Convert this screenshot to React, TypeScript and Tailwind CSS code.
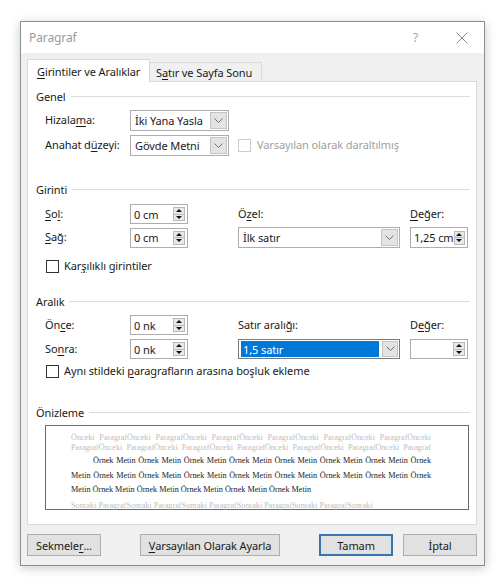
import React from "react";

function U({ children }: { children: React.ReactNode }) {
  return <span className="underline decoration-1 underline-offset-[2px]">{children}</span>;
}

function Chevron() {
  return (
    <svg width="9" height="6" viewBox="0 0 9 6">
      <polyline points="0.5,0.5 4.5,4.5 8.5,0.5" fill="none" stroke="#6d6d6d" strokeWidth="1" />
    </svg>
  );
}

function Arrows() {
  return (
    <div className="w-[12px] h-[14px] border border-[#b9b9b9] bg-[#e8e8e8] flex flex-col">
      <div className="flex-1 flex items-center justify-center border-b border-[#b9b9b9]">
        <div className="w-0 h-0 border-l-[3px] border-r-[3px] border-b-[3px] border-l-transparent border-r-transparent border-b-[#111]" />
      </div>
      <div className="flex-1 flex items-center justify-center">
        <div className="w-0 h-0 border-l-[3px] border-r-[3px] border-t-[3px] border-l-transparent border-r-transparent border-t-[#111]" />
      </div>
    </div>
  );
}

function Spin({ value, h = "h-[20px]" }: { value?: string; h?: string }) {
  return (
    <div className={`${h} w-[58px] border border-[#adadad] bg-white flex items-center pl-[3px] pr-[2px]`}>
      <span className="flex-1 leading-none">{value}</span>
      <Arrows />
    </div>
  );
}

function Combo({ value, w }: { value: string; w: string }) {
  return (
    <div className={`${w} h-[21px] border border-[#adadad] bg-white flex items-stretch p-[1px]`}>
      <div className="flex-1 flex items-center pl-[3px] leading-none">{value}</div>
      <div className="w-[17px] ml-[2px] border border-[#c3c3c3] bg-[#e3e3e3] flex items-center justify-center">
        <Chevron />
      </div>
    </div>
  );
}

function Check({ disabled }: { disabled?: boolean }) {
  return (
    <div
      className={`w-[13px] h-[13px] border bg-white ${disabled ? "border-[#cccccc]" : "border-[#333333]"}`}
    />
  );
}

function Heading({ title, className }: { title: string; className: string }) {
  return (
    <div className={`flex items-center h-[16px] pl-[8px] pr-[6px] ${className}`}>
      <span className="leading-none">{title}</span>
      <div className="flex-1 h-px bg-[#dcdcdc] ml-[5px]" />
    </div>
  );
}

function Button({ children, w, primary }: { children: React.ReactNode; w: string; primary?: boolean }) {
  return (
    <div
      className={`${w} h-[22px] bg-[#e1e1e1] flex items-center justify-center leading-none ${
        primary ? "border-2 border-[#3a74b0]" : "border border-[#adadad]"
      }`}
    >
      {children}
    </div>
  );
}

const before = [
  "Önceki ParagrafÖnceki ParagrafÖnceki ParagrafÖnceki ParagrafÖnceki ParagrafÖnceki ParagrafÖnceki",
  "ParagrafÖnceki ParagrafÖnceki ParagrafÖnceki ParagrafÖnceki ParagrafÖnceki ParagrafÖnceki Paragraf",
];

export default function App() {
  return (
    <div className="w-[501px] h-[588px] bg-white pt-[21px] pl-[20px] font-['Noto_Sans',sans-serif] text-[11px] tracking-[-0.1px] text-[#1a1a1a] whitespace-nowrap">
      <div className="w-[465px] h-[545px] border border-[#8e8e8e] bg-[#f0f0f0] shadow-[0_2px_10px_rgba(0,0,0,0.22)] flex flex-col">
        {/* title bar */}
        <div className="h-[31px] bg-white flex items-center pl-[8px] pr-[16px] text-[12px]">
          <span className="flex-1 text-[#9a9a9a]">Paragraf</span>
          <span className="text-[#a0a0a0] mr-[38px]">?</span>
          <svg width="12" height="12" viewBox="0 0 12 12">
            <line x1="0.5" y1="0.5" x2="11.5" y2="11.5" stroke="#8a8a8a" strokeWidth="1" />
            <line x1="11.5" y1="0.5" x2="0.5" y2="11.5" stroke="#8a8a8a" strokeWidth="1" />
          </svg>
        </div>

        <div className="flex-1 pl-[6px] pr-[7px] pt-[6px]">
          {/* tabs */}
          <div className="flex items-end h-[22px]">
            <div className="w-[123px] h-[23px] bg-white border border-b-0 border-[#d9d9d9] flex items-center pl-[9px] relative z-10 mb-[-1px]">
              <span className="leading-none"><U>G</U>irintiler ve Aralıklar</span>
            </div>
            <div className="w-[112px] h-[19px] bg-[#f0f0f0] border border-l-0 border-b-0 border-[#d9d9d9] flex items-center pl-[6px]">
              <span className="leading-none">S<U>a</U>tır ve Sayfa Sonu</span>
            </div>
          </div>

          {/* panel */}
          <div className="h-[444px] border border-[#d9d9d9] bg-white flex flex-col">
            <Heading title="Genel" className="mt-[6px]" />
            <div className="pl-[17px] mt-[6px] flex items-center h-[21px]">
              <span className="w-[85px]">Hizala<U>m</U>a:</span>
              <Combo value="İki Yana Yasla" w="w-[99px]" />
            </div>
            <div className="pl-[17px] mt-[4px] flex items-center h-[21px]">
              <span className="w-[85px]">Anahat d<U>ü</U>zeyi:</span>
              <Combo value="Gövde Metni" w="w-[99px]" />
              <div className="ml-[9px] flex items-center gap-[6px] text-[#a0a0a0]">
                <Check disabled />
                <span>Varsayılan olarak daraltılmış</span>
              </div>
            </div>

            <Heading title="Girinti" className="mt-[25px]" />
            <div className="pl-[17px] mt-[7px] grid grid-cols-[85px_108px_172px_58px] grid-rows-[20px_21px] gap-y-[3px] items-center">
              <span><U>S</U>o<U>l</U>:</span>
              <Spin value="0 cm" />
              <span>Ö<U>z</U>el:</span>
              <span><U>D</U>eğer:</span>
              <span><U>S</U>ağ:</span>
              <Spin value="0 cm" />
              <Combo value="İlk satır" w="w-[162px]" />
              <Spin value="1,25 cm" h="h-[21px]" />
            </div>
            <div className="pl-[18px] mt-[10px] flex items-center h-[16px] gap-[5px]">
              <Check />
              <span>Kar<U>ş</U>ılıklı girintiler</span>
            </div>

            <Heading title="Aralık" className="mt-[19px]" />
            <div className="pl-[17px] mt-[6px] grid grid-cols-[85px_108px_172px_58px] grid-rows-[20px_20px] gap-y-[4px] items-center">
              <span>Ön<U>c</U>e:</span>
              <Spin value="0 nk" />
              <span>Satır aralı<U>ğ</U>ı:</span>
              <span>D<U>e</U>ğer:</span>
              <span>So<U>n</U>ra:</span>
              <Spin value="0 nk" />
              <div className="w-[162px] h-[20px] border border-[#7a7a7a] bg-white flex items-stretch p-[1px]">
                <span className="flex-1 bg-[#0078d7] text-white flex items-center pl-[2px] leading-none ml-[1px]">1,5 satır</span>
                <div className="w-[16px] ml-[3px] border border-[#c3c3c3] bg-[#e3e3e3] flex items-center justify-center">
                  <Chevron />
                </div>
              </div>
              <Spin />
            </div>
            <div className="pl-[18px] mt-[4px] flex items-center h-[16px] gap-[5px]">
              <Check />
              <span>Aynı stildeki <U>p</U>aragrafların arasına boşluk ekleme</span>
            </div>

            <Heading title="Önizleme" className="mt-[25px]" />
            <div className="ml-[17px] mr-[7px] mt-[5px] h-[85px] border border-[#6a6a6a] bg-white pl-[25px] pr-[37px] pt-[7px] font-['Liberation_Serif',serif] text-[8.2px] tracking-normal leading-[9.5px]">
              {before.map((l) => (
                <div key={l} className="text-[#bdbdbd] [text-align-last:justify]">
                  {l}
                </div>
              ))}
              <div className="mt-[4px] pl-[22px] text-[#222] [text-align-last:justify]">
                Örnek Metin Örnek Metin Örnek Metin Örnek Metin Örnek Metin Örnek Metin Örnek Metin Örnek
              </div>
              <div className="mt-[5px] text-[#222] [text-align-last:justify]">
                Metin Örnek Metin Örnek Metin Örnek Metin Örnek Metin Örnek Metin Örnek Metin Örnek Metin Örnek
              </div>
              <div className="mt-[5px] text-[#222]">
                Metin Örnek Metin Örnek Metin Örnek Metin Örnek Metin Örnek Metin
              </div>
              <div className="mt-[6px] text-[#bdbdbd]">
                Sonraki ParagrafSonraki ParagrafSonraki ParagrafSonraki ParagrafSonraki ParagrafSonraki
              </div>
            </div>
          </div>

          {/* buttons */}
          <div className="flex items-center mt-[9px]">
            <Button w="w-[74px]">Sekmele<U>r</U>...</Button>
            <div className="ml-[39px]">
              <Button w="w-[140px]"><U>V</U>arsayılan Olarak Ayarla</Button>
            </div>
            <div className="ml-[39px]">
              <Button w="w-[74px]" primary>Tamam</Button>
            </div>
            <div className="ml-[10px]">
              <Button w="w-[74px]">İptal</Button>
            </div>
          </div>
        </div>
      </div>
    </div>
  );
}
